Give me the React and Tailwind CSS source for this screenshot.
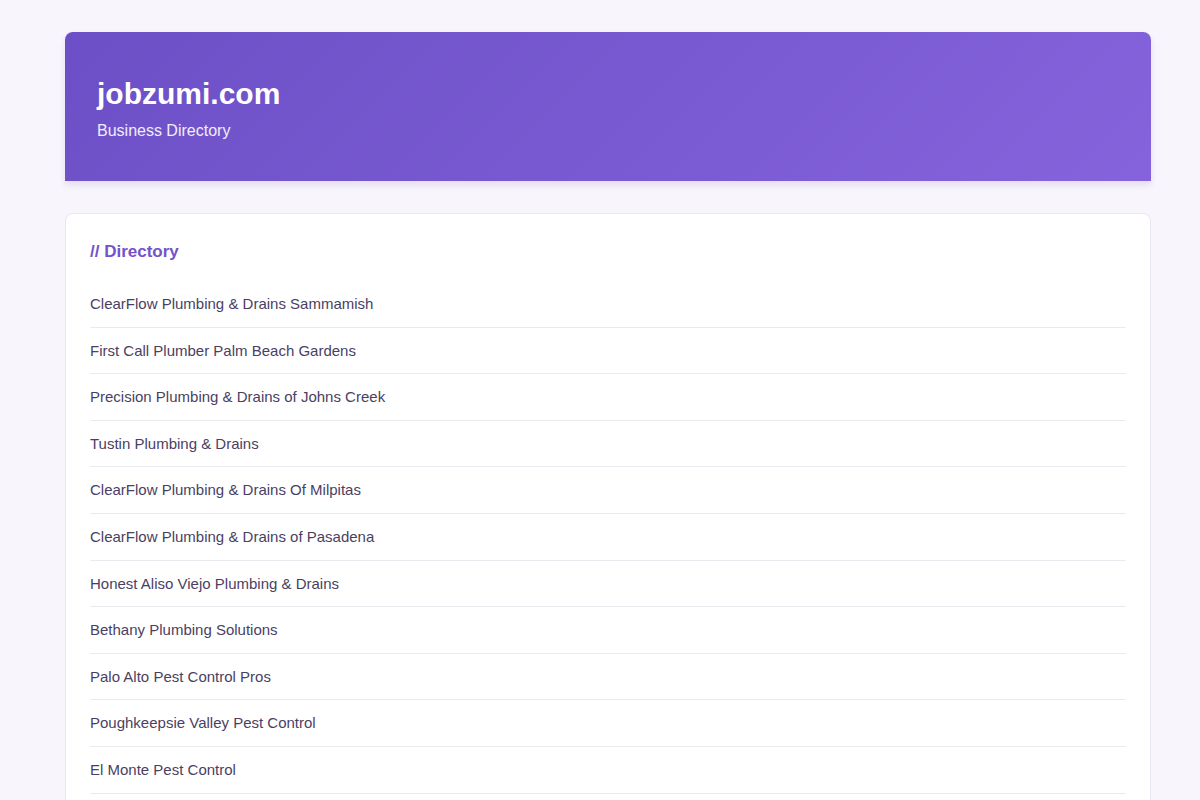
const listings = [
  "ClearFlow Plumbing & Drains Sammamish",
  "First Call Plumber Palm Beach Gardens",
  "Precision Plumbing & Drains of Johns Creek",
  "Tustin Plumbing & Drains",
  "ClearFlow Plumbing & Drains Of Milpitas",
  "ClearFlow Plumbing & Drains of Pasadena",
  "Honest Aliso Viejo Plumbing & Drains",
  "Bethany Plumbing Solutions",
  "Palo Alto Pest Control Pros",
  "Poughkeepsie Valley Pest Control",
  "El Monte Pest Control",
];

function Header() {
  return (
    <header className="rounded-t-lg bg-linear-135 from-[#6c4fc6] to-[#8563dc] px-8 pt-10 pb-[38px] text-white shadow-[0_4px_6px_rgba(90,50,140,0.12)]">
      <h1 className="mb-1 text-[30px] leading-[43px] font-bold">jobzumi.com</h1>
      <p className="text-base leading-6 text-white/90">Business Directory</p>
    </header>
  );
}

function Directory() {
  return (
    <section className="grow rounded-t-lg border border-b-0 border-[#ece5f5] bg-white px-6 pt-6">
      <h2 className="mb-4 text-[17px] leading-[27px] font-bold text-[#7452cb]">// Directory</h2>
      <ul>
        {listings.map((name) => (
          <li key={name} className="border-b border-[#eae9ef] py-3 text-[15px] leading-[1.44]">
            <a href="#" className="block text-[#4a3f63]">{name}</a>
          </li>
        ))}
      </ul>
    </section>
  );
}

export default function App() {
  return (
    <div className="flex min-h-screen flex-col bg-[#f8f5fd] pt-8 pr-[49px] pl-[65px] font-['Liberation_Sans',Arial,sans-serif]">
      <Header />
      <main className="mt-8 flex grow flex-col">
        <Directory />
      </main>
    </div>
  );
}
